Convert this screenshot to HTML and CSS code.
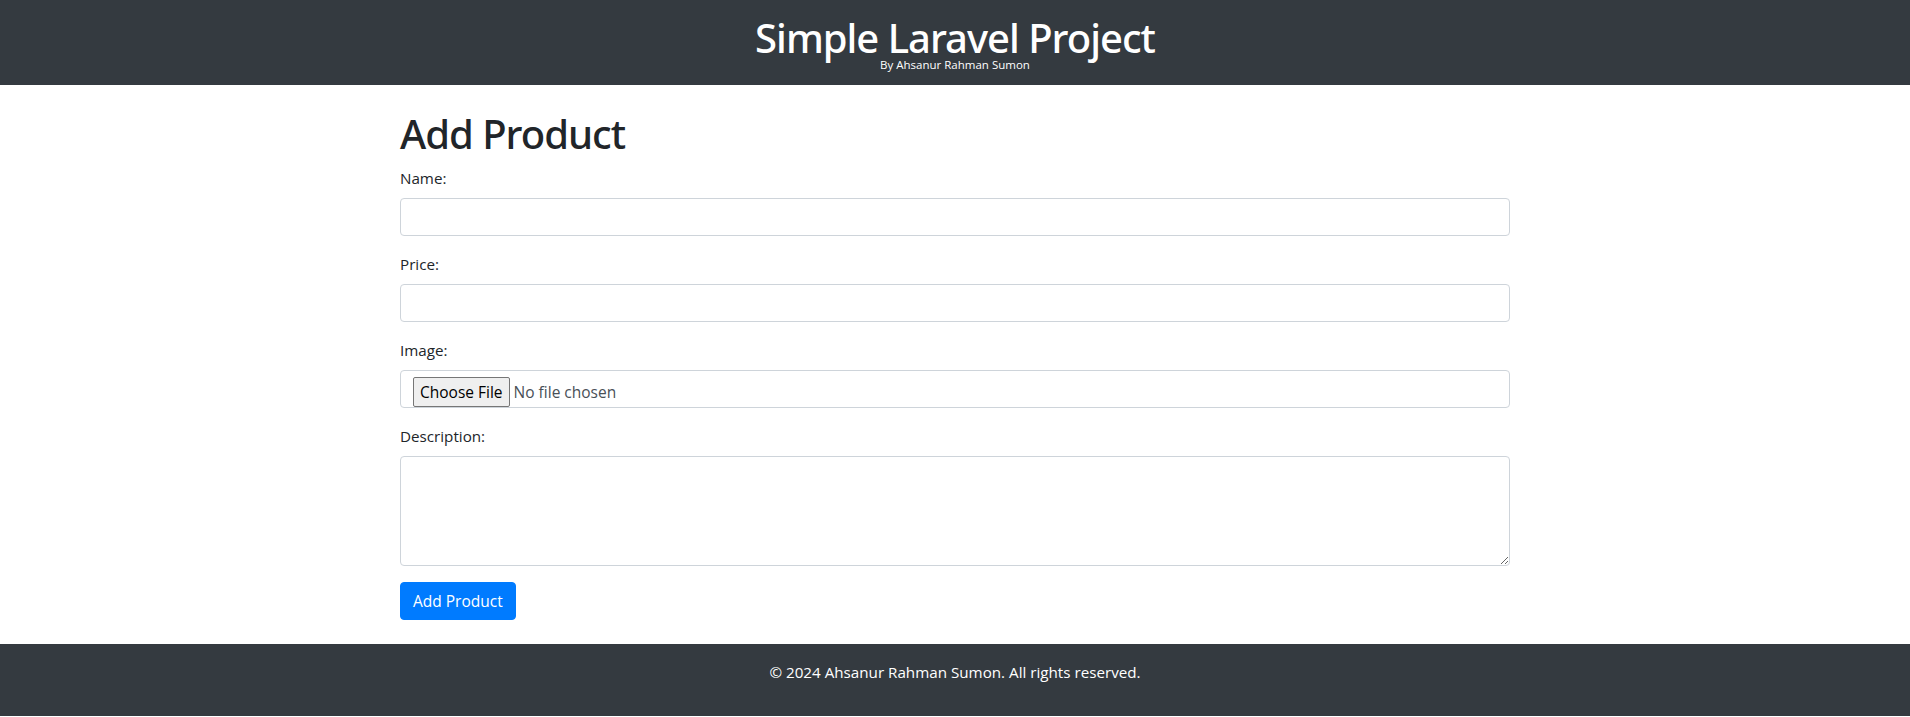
FILE: index.html
```
<!DOCTYPE html>
<html lang="en">
<head>
<meta charset="utf-8">
<title>Simple Laravel Project</title>
<link rel="stylesheet" href="styles.css">
</head>
<body>
<header class="site-header">
  <h1 class="site-title">Simple Laravel Project</h1>
  <p class="site-sub">By Ahsanur Rahman Sumon</p>
</header>
<main class="container">
  <h1 class="page-title">Add Product</h1>
  <form class="product-form">
    <div class="form-group">
      <label for="name">Name:</label>
      <input type="text" id="name" class="form-control">
    </div>
    <div class="form-group">
      <label for="price">Price:</label>
      <input type="text" id="price" class="form-control">
    </div>
    <div class="form-group">
      <label for="image">Image:</label>
      <div class="file-control">
        <span class="file-btn">Choose File</span>
        <span class="file-text">No file chosen</span>
      </div>
    </div>
    <div class="form-group">
      <label for="description">Description:</label>
      <textarea id="description" class="form-control textarea" rows="4"></textarea>
    </div>
    <button type="button" class="btn-primary">Add Product</button>
  </form>
</main>
<footer class="site-footer">
  <p>© 2024 Ahsanur Rahman Sumon. All rights reserved.</p>
</footer>
</body>
</html>
```
FILE: styles.css
```
* { box-sizing: border-box; }
html, body { margin: 0; padding: 0; }
body {
  font-family: "Open Sans", "Noto Sans", sans-serif;
  font-size: 16px;
  line-height: 1.5;
  color: #212529;
  background: #fff;
}
.site-header {
  background: #343a40;
  color: #fff;
  text-align: center;
  padding: 16px 0 15px;
}
.site-title {
  margin: 0;
  font-family: "Noto Sans", "Open Sans", sans-serif;
  font-weight: 500;
  font-size: 40px;
  line-height: 44px;
  letter-spacing: -1px;
}
.site-sub {
  margin: 0;
  font-size: 11.5px;
  line-height: 10px;
}
.container {
  width: 1110px;
  margin: 24px auto 24px;
}
.page-title {
  margin: 0 0 8px;
  padding-top: 1px;
  font-family: "Noto Sans", "Open Sans", sans-serif;
  font-weight: 500;
  font-size: 40px;
  line-height: 48px;
  letter-spacing: -1px;
}
.form-group { margin-bottom: 16px; }
label {
  display: block;
  margin-bottom: 8px;
  font-size: 15.2px;
  line-height: 24px;
}
.form-control {
  display: block;
  width: 100%;
  height: 38px;
  padding: 6px 12px;
  font-family: inherit;
  font-size: 16px;
  line-height: 1.5;
  color: #495057;
  background: #fff;
  border: 1px solid #ced4da;
  border-radius: 4px;
}
.textarea {
  height: 110px;
  resize: vertical;
}
.file-control {
  display: flex;
  align-items: flex-start;
  height: 38px;
  padding: 6px 12px;
  border: 1px solid #ced4da;
  border-radius: 4px;
  color: #495057;
}
.file-btn {
  height: 30px;
  padding: 0 6px;
  margin-right: 4px;
  background: #efefef;
  border: 1px solid #767676;
  border-radius: 2px;
  color: #000;
  font-size: 15.5px;
  line-height: 28px;
}
.file-text {
  line-height: 30px;
  font-size: 15.5px;
}
.btn-primary {
  display: block;
  height: 38px;
  padding: 6px 12px;
  font-family: inherit;
  font-size: 15.5px;
  line-height: 24px;
  color: #fff;
  background: #007bff;
  border: 1px solid #007bff;
  border-radius: 4px;
}
.site-footer {
  background: #343a40;
  color: #fff;
  text-align: center;
  padding: 16px;
}
.site-footer p {
  margin: 0 0 16px;
  font-size: 15.2px;
  line-height: 24px;
}
```
